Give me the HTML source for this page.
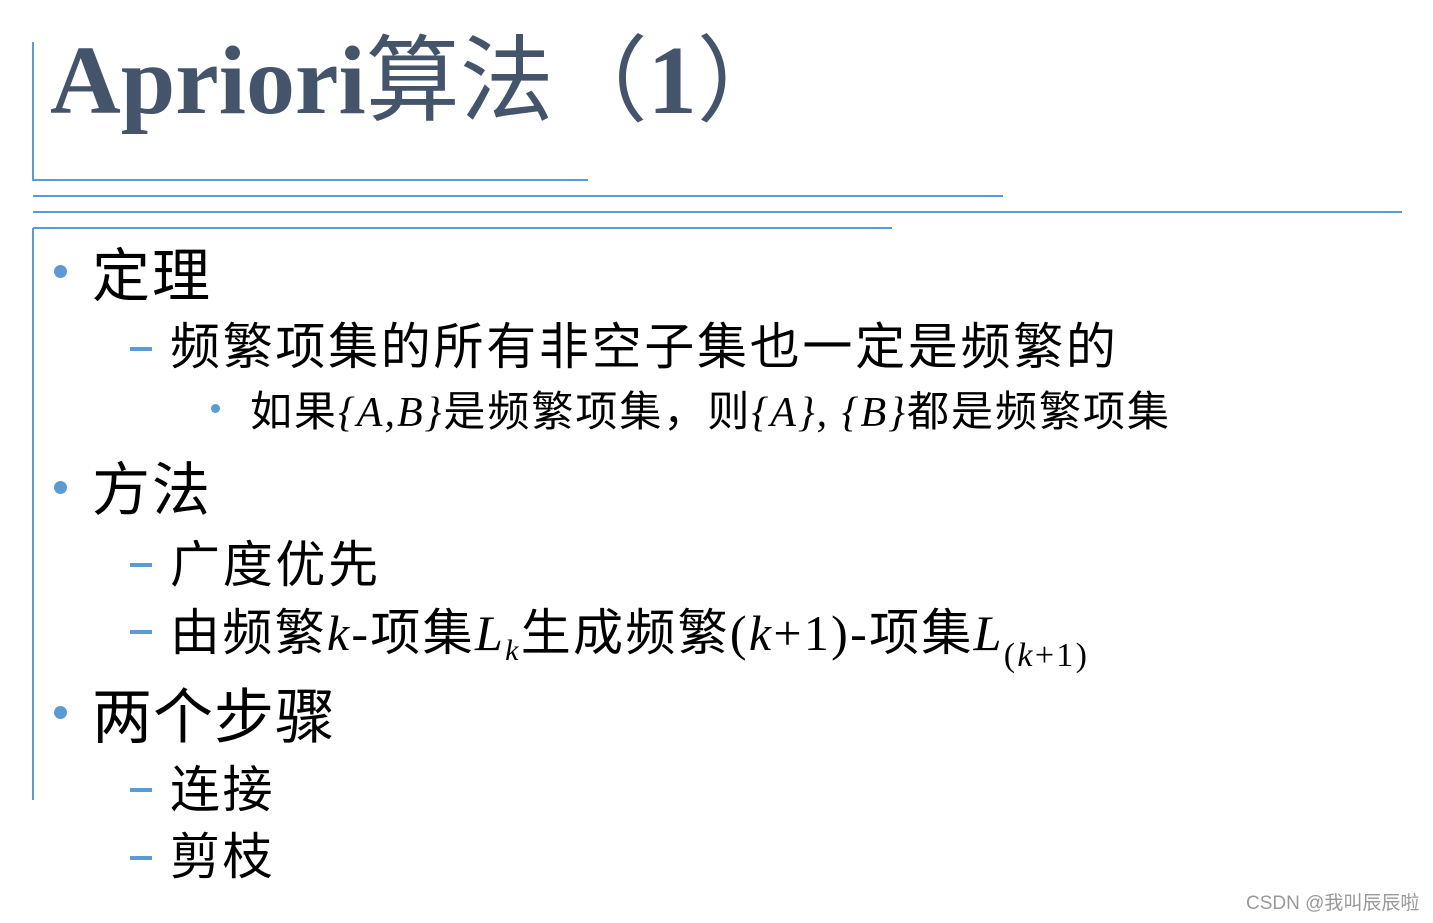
<!DOCTYPE html>
<html><head><meta charset="utf-8"><style>
body{margin:0;width:1433px;height:923px;background:#fff;position:relative;overflow:hidden;font-family:"Liberation Sans","Noto Sans CJK SC",sans-serif;}
.l{position:absolute;background:#5b9bd5;}
.t{position:absolute;white-space:nowrap;line-height:1;color:#000;}
.dot{position:absolute;border-radius:50%;background:#5b9bd5;}
.dash{position:absolute;height:4px;width:22px;background:#5b9bd5;}
i{font-family:"Liberation Serif",serif;}
.s{font-family:"Liberation Serif",serif;}
</style></head><body>
<div class="l" style="left:32px;top:42px;width:2px;height:139px"></div>
<div class="l" style="left:32px;top:179px;width:556px;height:2px"></div>
<div class="l" style="left:33px;top:195px;width:970px;height:2px"></div>
<div class="l" style="left:33px;top:211px;width:1369px;height:2px"></div>
<div class="l" style="left:33px;top:227px;width:859px;height:2px"></div>
<div class="l" style="left:32px;top:228px;width:2px;height:572px"></div>

<div class="t" style="left:50px;top:26px;color:#44546a;font-size:98px;"><span style="font-family:'Liberation Serif',serif;font-weight:bold">Apriori</span><span style="font-family:'Noto Sans CJK SC',sans-serif;font-size:94px">算法（</span><span style="font-family:'Liberation Serif',serif;font-weight:bold">1</span><span style="font-family:'Noto Sans CJK SC',sans-serif;font-size:94px">）</span></div>

<div class="dot" style="left:54px;top:265px;width:13px;height:13px"></div>
<div class="t" style="left:92px;top:248px;font-size:58px;letter-spacing:2px">定理</div>
<div class="dash" style="left:130px;top:347px"></div>
<div class="t" style="left:170px;top:322px;font-size:50px;letter-spacing:2.7px">频繁项集的所有非空子集也一定是频繁的</div>
<div class="dot" style="left:211px;top:404px;width:9px;height:9px"></div>
<div class="t" style="left:250px;top:391px;font-size:42px;letter-spacing:2px">如果<i>{A,B}</i>是频繁项集，则<i>{A}, {B}</i>都是频繁项集</div>

<div class="dot" style="left:54px;top:481px;width:13px;height:13px"></div>
<div class="t" style="left:92px;top:462px;font-size:58px;letter-spacing:2px">方法</div>
<div class="dash" style="left:130px;top:563px"></div>
<div class="t" style="left:170px;top:540px;font-size:50px;letter-spacing:2.7px">广度优先</div>
<div class="dash" style="left:130px;top:630px"></div>
<div class="t" style="left:170px;top:608px;font-size:50px;letter-spacing:2.3px">由频繁<i>k</i><span class="s">-</span>项集<i>L</i><sub style="font-size:30px;vertical-align:-10px"><i>k</i></sub>生成频繁<span class="s">(<i>k</i>+1)-</span>项集<i>L</i><sub style="font-size:34px;vertical-align:-16px" class="s">(<i>k</i>+1)</sub></div>

<div class="dot" style="left:54px;top:706px;width:13px;height:13px"></div>
<div class="t" style="left:92px;top:688px;font-size:60px;letter-spacing:1px">两个步骤</div>
<div class="dash" style="left:130px;top:788px"></div>
<div class="t" style="left:170px;top:765px;font-size:50px;letter-spacing:2.5px">连接</div>
<div class="dash" style="left:130px;top:856px"></div>
<div class="t" style="left:170px;top:832px;font-size:50px;letter-spacing:2.5px">剪枝</div>

<div class="t" style="left:1246px;top:894px;font-size:19px;color:#999">CSDN @我叫辰辰啦</div>
</body></html>
